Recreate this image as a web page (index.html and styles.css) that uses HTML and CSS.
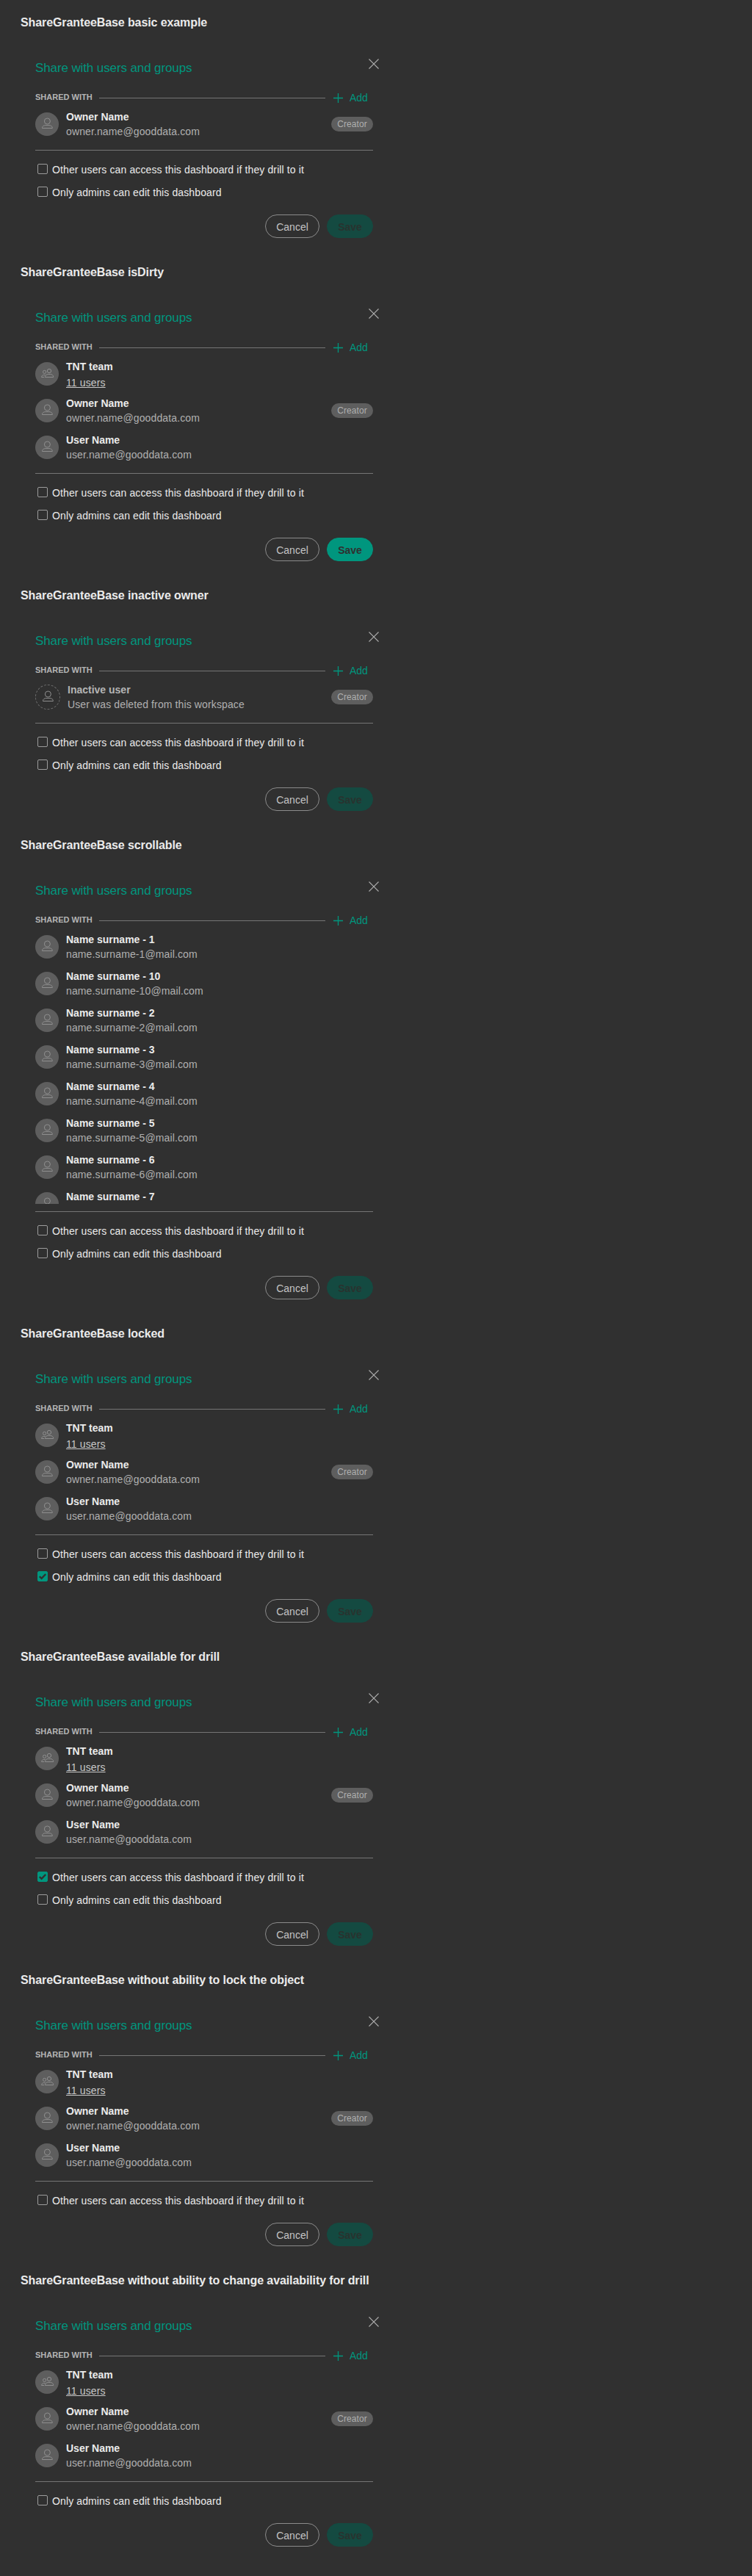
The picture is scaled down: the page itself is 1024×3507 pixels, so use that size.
FILE: index.html
```html
<!DOCTYPE html>
<html lang="en">
<head>
<meta charset="utf-8">
<title>ShareGranteeBase</title>
<link rel="stylesheet" href="styles.css">
</head>
<body>
<svg class="sprite" aria-hidden="true">
  <symbol id="user" viewBox="0 0 32 32"><circle cx="16.400" cy="12" r="4"/><path d="M9.500 21.500v-.7c0-1.900 2.300-3.200 4.300-3.200h5.200c2 0 4.300 1.300 4.300 3.200v.7z"/></symbol>
  <symbol id="group" viewBox="0 0 32 32"><circle cx="19" cy="12" r="2.700"/><circle cx="12.600" cy="13.400" r="2.100"/><path d="M13.500 20.500v-.6c0-1.900 2-3.400 4-3.400h3.200c2 0 4 1.500 4 3.400v.6zM13.600 17.500h-1.800c-1.800 0-3.200 1-3.200 3h3.600"/></symbol>
</svg>
<main class="stories" id="stories"></main>
<script src="stories.js"></script>
</body>
</html>
```
FILE: styles.css
```css
* { box-sizing: border-box; }
body { margin: 0; background: #303030; color: #ebebeb; font: 14px/20px "Liberation Sans", Arial, sans-serif; }
.sprite { display: none; }
.stories { padding: 20px 28px 0; }
.story-title { margin: 0; height: 20px; padding-top: 1px; font-size: 16px; line-height: 20px; font-weight: 700; letter-spacing: -0.1px; }
.dialog { position: relative; width: 500px; padding: 41px 20px 36px; }
.close { position: absolute; top: 40px; right: 12px; width: 14px; height: 14px; fill: none; stroke: #b0b0b0; stroke-width: 1.1; }
.heading { margin: 0; height: 24px; font-size: 17px; line-height: 24px; font-weight: 400; letter-spacing: -0.11px; color: #00967e; }
.shared { display: flex; align-items: flex-start; height: 20px; margin-top: 18px; }
.shared-label { width: 87px; font-size: 11px; line-height: 18px; height: 20px; font-weight: 700; color: #b5b5b5; }
.shared-line { width: 308px; height: 0; margin-top: 10px; border-top: 1px solid #757575; }
.add { display: flex; align-items: center; gap: 9px; margin-left: 11px; color: #00967e; }
.add svg { width: 13px; height: 13px; margin-top: 1px; stroke: currentColor; stroke-width: 1.3; }
.list { padding-top: 1px; max-height: 376px; overflow: hidden; }
.grantee { display: flex; align-items: center; height: 50px; }
.avatar { display: flex; align-items: center; justify-content: center; width: 32px; height: 32px; margin-right: 10px; border-radius: 50%; background: #5e5e5e; }
.avatar svg { width: 32px; height: 32px; fill: none; stroke: #8f8f8f; }
.avatar.inactive { width: 34px; height: 34px; border: 1px dashed #707070; background: none; }
.info { flex: 1; }
.name { height: 20px; font-weight: 700; }
.detail { height: 20px; color: #b0b0b0; letter-spacing: 0.12px; }
.detail.users { padding-top: 2px; color: #c8c8c8; text-decoration: underline; }
.is-inactive .name { color: #b5b5b5; }
.creator { width: 57px; height: 20px; border-radius: 10px; background: #5e5e5e; color: #b0b0b0; font-size: 12px; line-height: 20px; letter-spacing: 0.1px; text-align: center; }
.options { margin-top: 10px; padding: 10px 3px 0; border-top: 1px solid #757575; }
.option { display: flex; align-items: center; gap: 6px; height: 31px; letter-spacing: 0.12px; }
.box { width: 14px; height: 14px; margin-bottom: 1px; border: 1px solid #9c9c9c; border-radius: 2px; }
.box svg { display: block; width: 12px; height: 12px; fill: none; stroke: #303030; stroke-width: 2.4; }
.box.checked { border-color: #00967e; background: #00967e; }
.actions { display: flex; justify-content: flex-end; gap: 10px; margin-top: 15px; }
.button { width: 74px; height: 32px; padding: 1px 0 0; border: 1px solid #8b8b8b; border-radius: 16px; background: none; color: #c4c4c4; font: inherit; }
.button.save { width: 63px; border-color: #00967e; background: #00967e; color: #303030; font-weight: 700; }
.button.save:disabled { border-color: #144a41; background: #144a41; color: #28332f; }
```
FILE: stories.js
```js
const owner = { name: "Owner Name", detail: "owner.name@gooddata.com", creator: true };
const team = [{ name: "TNT team", detail: "11 users", group: true }, owner, { name: "User Name", detail: "user.name@gooddata.com" }];
const many = [1, 10, 2, 3, 4, 5, 6, 7].map(n => ({ name: `Name surname - ${n}`, detail: n === 7 ? "" : `name.surname-${n}@mail.com` }));
const stories = [
  { title: "basic example", list: [owner] },
  { title: "isDirty", list: team, dirty: true },
  { title: "inactive owner", list: [{ name: "Inactive user", detail: "User was deleted from this workspace", creator: true, inactive: true }] },
  { title: "scrollable", list: many },
  { title: "locked", list: team, locked: true },
  { title: "available for drill", list: team, drill: true },
  { title: "without ability to lock the object", list: team, hideLock: true },
  { title: "without ability to change availability for drill", list: team, hideDrill: true },
];
const grantee = g => `<div class="grantee${g.inactive ? " is-inactive" : ""}">
  <div class="avatar${g.inactive ? " inactive" : ""}"><svg><use href="#${g.group ? "group" : "user"}"/></svg></div>
  <div class="info"><div class="name">${g.name}</div><div class="detail${g.group ? " users" : ""}">${g.detail}</div></div>
  ${g.creator ? '<span class="creator">Creator</span>' : ""}</div>`;
const option = (text, on) => `<label class="option"><span class="box${on ? " checked" : ""}">${on ? '<svg viewBox="0 0 12 12"><path d="M1.800 6.200l2.800 2.700L10.200 3"/></svg>' : ""}</span>${text}</label>`;
document.getElementById("stories").innerHTML = stories.map(s => `<section class="story">
  <h2 class="story-title">ShareGranteeBase ${s.title}</h2>
  <div class="dialog">
    <svg class="close" viewBox="0 0 14 14"><path d="M.5.5l13 13M13.500.5l-13 13"/></svg>
    <h3 class="heading">Share with users and groups</h3>
    <div class="shared"><span class="shared-label">SHARED WITH</span><span class="shared-line"></span>
      <span class="add"><svg viewBox="0 0 13 13"><path d="M6.500 0v13M0 6.500h13"/></svg>Add</span></div>
    <div class="list">${s.list.map(grantee).join("")}</div>
    <div class="options">${s.hideDrill ? "" : option("Other users can access this dashboard if they drill to it", s.drill)}${s.hideLock ? "" : option("Only admins can edit this dashboard", s.locked)}</div>
    <div class="actions"><button class="button">Cancel</button><button class="button save"${s.dirty ? "" : " disabled"}>Save</button></div>
  </div></section>`).join("");
```
